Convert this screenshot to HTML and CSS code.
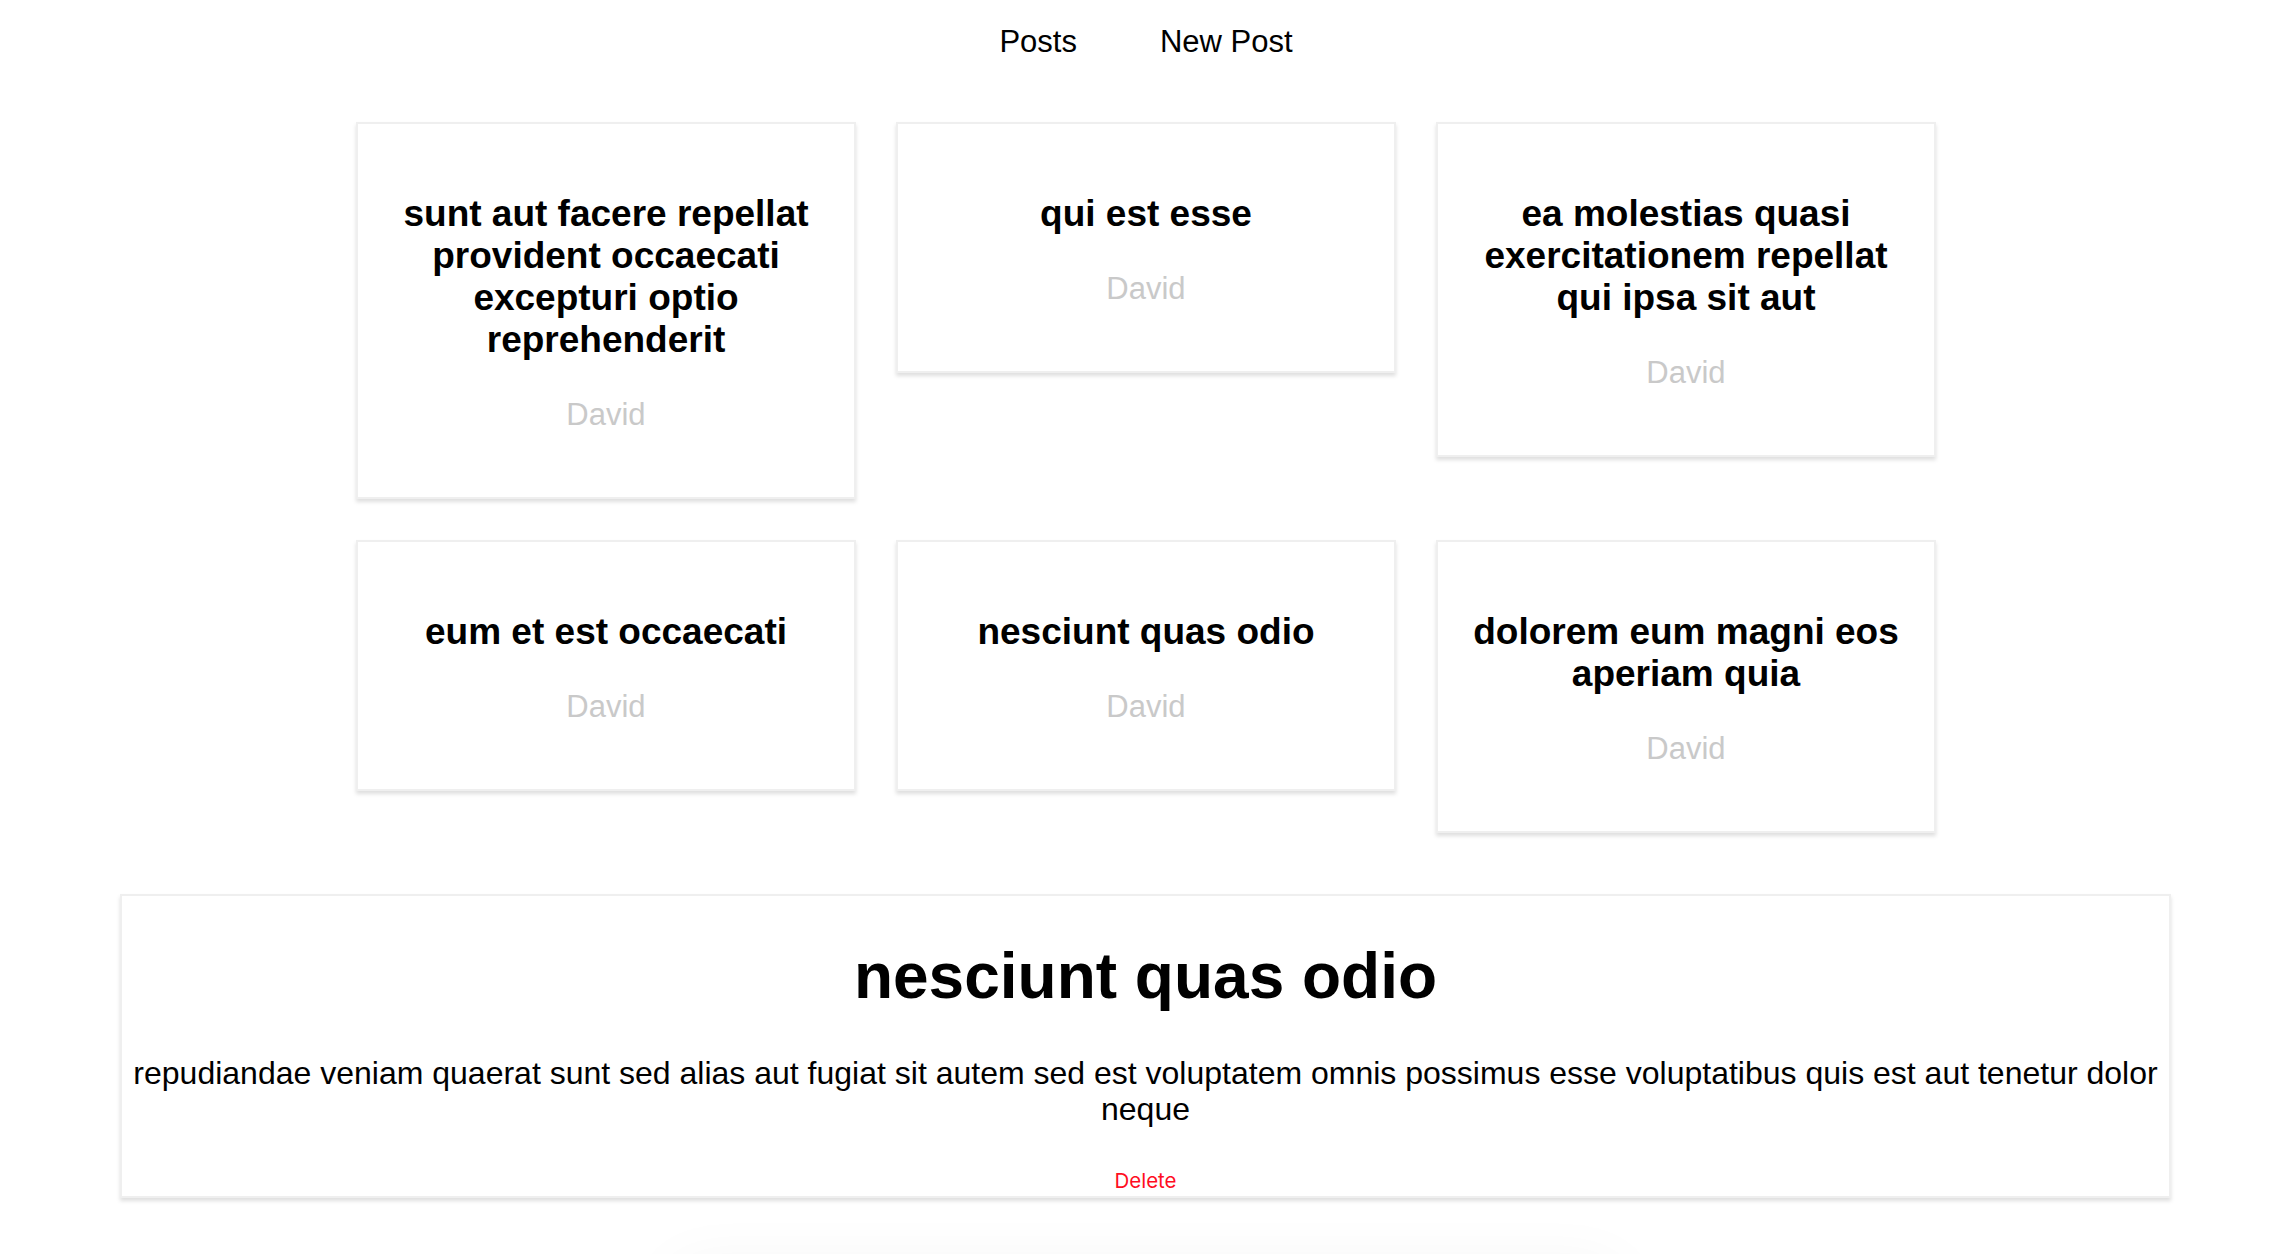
FILE: index.html
```html
<!DOCTYPE html>
<html lang="en">
<head>
<meta charset="utf-8">
<title>Posts</title>
<link rel="stylesheet" href="styles.css">
</head>
<body>
  <nav class="nav">
    <a class="nav-link" href="#">Posts</a>
    <a class="nav-link" href="#">New Post</a>
  </nav>

  <main class="grid">
    <article class="card">
      <h2 class="card-title">sunt aut facere repellat provident occaecati excepturi optio reprehenderit</h2>
      <p class="card-author">David</p>
    </article>
    <article class="card">
      <h2 class="card-title">qui est esse</h2>
      <p class="card-author">David</p>
    </article>
    <article class="card">
      <h2 class="card-title">ea molestias quasi exercitationem repellat qui ipsa sit aut</h2>
      <p class="card-author">David</p>
    </article>
    <article class="card">
      <h2 class="card-title">eum et est occaecati</h2>
      <p class="card-author">David</p>
    </article>
    <article class="card">
      <h2 class="card-title">nesciunt quas odio</h2>
      <p class="card-author">David</p>
    </article>
    <article class="card">
      <h2 class="card-title">dolorem eum magni eos aperiam quia</h2>
      <p class="card-author">David</p>
    </article>
  </main>

  <section class="detail">
    <h1 class="detail-title">nesciunt quas odio</h1>
    <p class="detail-body">repudiandae veniam quaerat sunt sed alias aut fugiat sit autem sed est voluptatem omnis possimus esse voluptatibus quis est aut tenetur dolor neque</p>
    <button class="delete" type="button">Delete</button>
  </section>

  <div class="below"></div>
</body>
</html>
```

FILE: styles.css
```css
html, body {
  background: #ffffff;
}

body {
  margin: 0;
  padding: 24px 0 0 18px;
  font-family: "Liberation Sans", Arial, Helvetica, sans-serif;
  color: #000;
  overflow: hidden;
}

.nav {
  display: flex;
  justify-content: center;
  gap: 83px;
  height: 36px;
}

.nav-link {
  font-size: 31px;
  line-height: 36px;
  color: #000;
  text-decoration: none;
}

.grid {
  display: grid;
  grid-template-columns: repeat(3, 500px);
  column-gap: 40px;
  row-gap: 41px;
  justify-content: center;
  align-items: start;
  margin-top: 62px;
}

.card {
  box-sizing: border-box;
  background: #fff;
  border: 2px solid #efefef;
  box-shadow: 0 3px 4px rgba(0, 0, 0, 0.13);
  padding: 69px 28px 64px;
  text-align: center;
}

.card-title {
  margin: 0 0 36px;
  font-size: 37px;
  line-height: 42px;
  font-weight: 700;
}

.card-author {
  margin: 0;
  font-size: 31px;
  line-height: 36px;
  color: #c9c9c9;
}

.detail {
  box-sizing: border-box;
  margin: 61px 103px 0 102px;
  background: #fff;
  border: 2px solid #efefef;
  box-shadow: 0 3px 4px rgba(0, 0, 0, 0.13);
  padding: 43px 4px 3px;
  text-align: center;
}

.detail-title {
  margin: 0 0 42px;
  font-size: 64px;
  line-height: 74px;
  font-weight: 700;
}

.detail-body {
  margin: 0 0 41px;
  font-size: 32px;
  line-height: 36px;
}

.delete {
  display: inline-block;
  border: none;
  background: none;
  padding: 0;
  margin: 0;
  font-family: Inter, "Noto Sans", sans-serif;
  font-size: 20.5px;
  line-height: 25px;
  color: #ff0d22;
  cursor: pointer;
}

.below {
  width: 940px;
  height: 300px;
  margin: 70px auto 0;
  background: #fff;
  box-shadow: 0 0 60px rgba(0, 0, 0, 0.05);
}
```
